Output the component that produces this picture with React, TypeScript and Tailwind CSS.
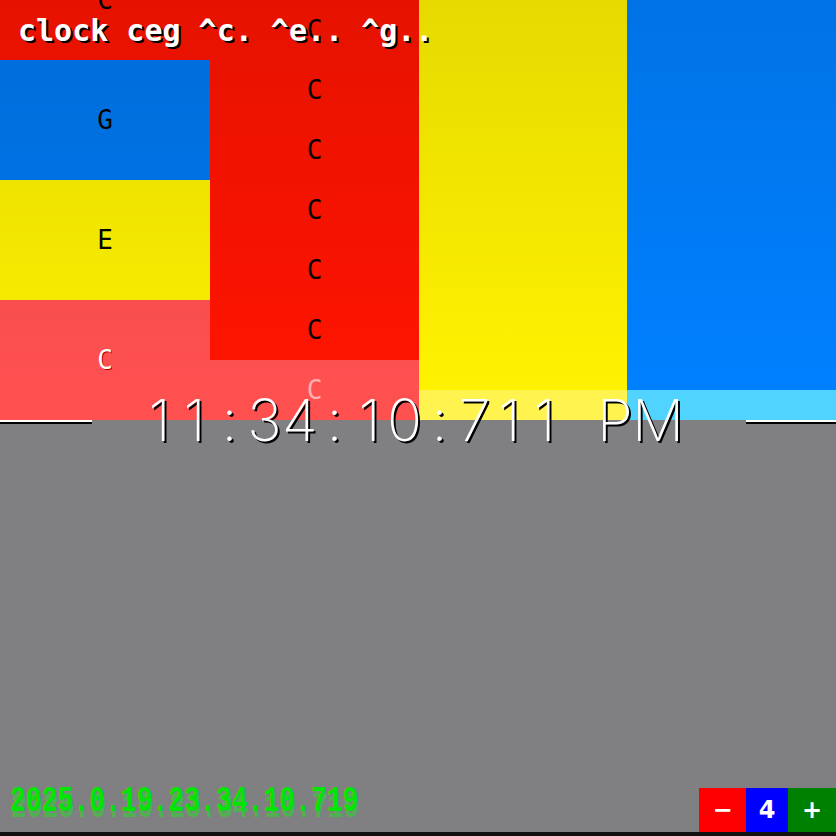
const mono = "font-['DejaVu_Sans_Mono','Liberation_Mono',monospace]";

function Label({ text, className = "" }: { text: string; className?: string }) {
  return (
    <div className={`flex flex-1 items-center justify-center text-[26px] leading-none ${mono} ${className}`}>
      {text}
    </div>
  );
}

const time = "11:34:10:711 PM";

export default function App() {
  return (
    <div className="relative flex h-[836px] w-[836px] flex-col overflow-hidden bg-[#807f82]">
      {/* pattern columns */}
      <div className="relative grid h-[420px] grid-cols-[210px_209px_208px_209px]">
        <div className="flex flex-col">
          <div className="relative h-[60px] bg-[#ff1400]">
            <div className={`absolute left-0 right-0 top-[-13px] text-center text-[26px] leading-none text-black ${mono}`}>C</div>
          </div>
          <div className="flex h-[120px] bg-[#0078f0]">
            <Label text="G" className="text-black" />
          </div>
          <div className="flex h-[120px] bg-[#fcf000]">
            <Label text="E" className="text-black" />
          </div>
          <div className="flex h-[120px] bg-[#ff5050]">
            <Label text="C" className="text-white [text-shadow:1px_1px_0_#c00000]" />
          </div>
        </div>
        <div className="flex flex-col">
          <div className="flex h-[360px] flex-col bg-[#ff1400]">
            {Array.from({ length: 6 }).map((_, i) => (
              <Label key={i} text="C" className="text-black" />
            ))}
          </div>
          <div className="flex h-[60px] bg-[#ff5050]">
            <Label text="C" className="text-[#ffb0b0]" />
          </div>
        </div>
        <div className="flex flex-col">
          <div className="h-[390px] bg-[#fff200]" />
          <div className="h-[30px] bg-[#fff350]" />
        </div>
        <div className="flex flex-col">
          <div className="h-[390px] bg-[#0080ff]" />
          <div className="h-[30px] bg-[#50d4ff]" />
        </div>
        {/* darker toward the top */}
        <div className="pointer-events-none absolute inset-x-0 top-0 h-[390px] bg-gradient-to-b from-black/10 to-transparent" />

        <div
          className={`absolute left-[18px] top-[16px] whitespace-pre text-[30px] font-bold leading-none text-white [text-shadow:2px_2px_0_#000] ${mono}`}
        >
          clock ceg ^c. ^e.. ^g..
        </div>
      </div>

      {/* clock row */}
      <div className="relative h-0">
        <div className="absolute inset-x-0 top-[-22px] flex h-[44px] items-center">
          <div className="mt-[2px] h-[2px] w-[92px] bg-white shadow-[0_2px_0_#000]" />
          <div className="ml-[50px] flex font-['Inter',sans-serif] text-[58px] font-extralight leading-none text-white [text-shadow:2px_2px_0_#000]">
            {time.split("").map((ch, i) => (
              <span key={i} className="inline-block w-[35px] text-center">
                {ch === " " ? "\u00a0" : ch}
              </span>
            ))}
          </div>
          <div className="flex-1" />
          <div className="mt-[2px] h-[2px] w-[90px] bg-white shadow-[0_2px_0_#000]" />
        </div>
      </div>

      {/* bottom bar */}
      <div className="flex flex-1 items-end justify-between">
        <div className="mb-[12px] ml-[10px] origin-bottom scale-y-[1.4] font-['Liberation_Mono',monospace] text-[26.4px] font-bold leading-none text-[#00e600] [text-shadow:1px_4px_0_rgba(40,220,40,0.55)]">
          2025.0.19.23.34.10.719
        </div>
        <div className="flex h-[44px] font-['DejaVu_Sans',sans-serif] text-[24px] font-bold text-white">
          <button className="flex w-[47px] items-center justify-center bg-[#ff0000]">−</button>
          <button className="flex w-[42px] items-center justify-center bg-[#0000ff]">4</button>
          <button className="flex w-[48px] items-center justify-center bg-[#008000]">+</button>
        </div>
      </div>
      <div className="h-[4px] bg-[#111]" />
    </div>
  );
}
